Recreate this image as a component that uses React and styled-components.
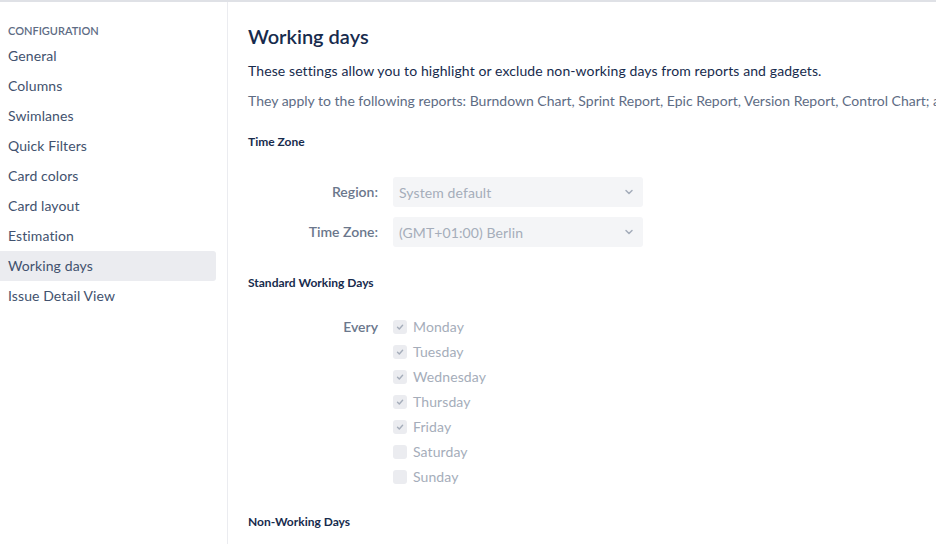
import React from "react";
import styled, { createGlobalStyle } from "styled-components";

const GlobalStyle = createGlobalStyle`
  html, body {
    margin: 0;
    padding: 0;
    background: #fff;
    overflow: hidden;
  }
  body {
    font-family: "Lato", "Noto Sans", sans-serif;
    color: #172b4d;
  }
`;

const Page = styled.div`
  display: flex;
  height: 544px;
  border-top: 2px solid #dfe1e6;
  box-sizing: border-box;
`;

const Sidebar = styled.nav`
  width: 228px;
  flex-shrink: 0;
  border-right: 1px solid #ebecf0;
  padding-top: 22px;
  padding-right: 11px;
  box-sizing: border-box;
`;

const SideHeading = styled.div`
  font-size: 11px;
  font-weight: 600;
  color: #5e6c84;
  padding-left: 8px;
  line-height: 13px;
  margin-bottom: 4px;
  text-transform: uppercase;
`;

const SideItem = styled.a`
  display: block;
  height: 30px;
  line-height: 30px;
  padding-left: 8px;
  font-size: 14px;
  letter-spacing: 0.1px;
  color: #42526e;
  border-radius: 0 3px 3px 0;
  background: ${(p) => (p.$active ? "#ebecf0" : "transparent")};
`;

const Main = styled.main`
  flex: 1;
  padding: 20px 0 0 20px;
  white-space: nowrap;
  overflow: hidden;
`;

const Title = styled.h1`
  margin: 0;
  font-size: 20px;
  font-weight: 600;
  line-height: 28px;
  color: #172b4d;
`;

const Text = styled.p`
  margin: ${(p) => (p.$first ? "11px" : "10px")} 0 0;
  font-size: 14px;
  letter-spacing: ${(p) => (p.$muted ? "0" : "0.1px")};
  line-height: 20px;
  color: ${(p) => (p.$muted ? "#5e6c84" : "#172b4d")};
`;

const SectionTitle = styled.h3`
  margin: ${(p) => p.$mt || "24px"} 0 0;
  font-size: 12px;
  font-weight: 700;
  line-height: 16px;
  color: #172b4d;
`;

const Form = styled.div`
  display: flex;
  flex-direction: column;
  gap: 10px;
  margin-top: ${(p) => p.$mt || "27px"};
`;

const Row = styled.div`
  display: grid;
  grid-template-columns: 130px 250px;
  column-gap: 15px;
  align-items: ${(p) => (p.$top ? "start" : "center")};
`;

const Label = styled.label`
  text-align: right;
  font-size: 14px;
  font-weight: 600;
  color: #6b778c;
  line-height: 20px;
`;

const Select = styled.div`
  height: 30px;
  background: #f4f5f7;
  border-radius: 3px;
  display: flex;
  align-items: center;
  justify-content: space-between;
  padding: 0 8px 0 6px;
  font-size: 14px;
  letter-spacing: 0.1px;
  color: #a5adba;
`;

const Checks = styled.div`
  display: flex;
  flex-direction: column;
`;

const CheckRow = styled.div`
  display: flex;
  align-items: center;
  gap: 6px;
  height: 25px;
  margin-top: -3px;
  margin-bottom: 3px;
  font-size: 14px;
  letter-spacing: 0.1px;
  color: #a5adba;
`;

const Box = styled.span`
  width: 14px;
  height: 14px;
  border-radius: 3px;
  background: #ebecf0;
  display: flex;
  align-items: center;
  justify-content: center;
`;

const Chevron = () => (
  <svg width="12" height="12" viewBox="0 0 12 12">
    <path d="M3 4.5 L6 7.5 L9 4.5" fill="none" stroke="#a5adba" strokeWidth="1.5" strokeLinecap="round" strokeLinejoin="round" />
  </svg>
);

const Tick = () => (
  <svg width="10" height="10" viewBox="0 0 10 10">
    <path d="M2.5 5.2 L4.3 7 L7.6 3.3" fill="none" stroke="#a5adba" strokeWidth="1.4" strokeLinecap="round" strokeLinejoin="round" />
  </svg>
);

const navItems = [
  "General",
  "Columns",
  "Swimlanes",
  "Quick Filters",
  "Card colors",
  "Card layout",
  "Estimation",
  "Working days",
  "Issue Detail View",
];

const days = [
  ["Monday", true],
  ["Tuesday", true],
  ["Wednesday", true],
  ["Thursday", true],
  ["Friday", true],
  ["Saturday", false],
  ["Sunday", false],
];

export default function App() {
  return (
    <>
      <GlobalStyle />
      <Page>
        <Sidebar>
          <SideHeading>Configuration</SideHeading>
          {navItems.map((item) => (
            <SideItem key={item} $active={item === "Working days"}>
              {item}
            </SideItem>
          ))}
        </Sidebar>
        <Main>
          <Title>Working days</Title>
          <Text $first>
            These settings allow you to highlight or exclude non-working days from reports and gadgets.
          </Text>
          <Text $muted>
            They apply to the following reports: Burndown Chart, Sprint Report, Epic Report, Version Report, Control Chart; and the following gadgets: Sprint Health.
          </Text>

          <SectionTitle $mt="23px">Time Zone</SectionTitle>
          <Form>
            <Row>
              <Label>Region:</Label>
              <Select>
                System default
                <Chevron />
              </Select>
            </Row>
            <Row>
              <Label>Time Zone:</Label>
              <Select>
                (GMT+01:00) Berlin
                <Chevron />
              </Select>
            </Row>
          </Form>

          <SectionTitle $mt="28px">Standard Working Days</SectionTitle>
          <Form $mt="26px">
            <Row $top>
              <Label>Every</Label>
              <Checks>
                {days.map(([d, on]) => (
                  <CheckRow key={d}>
                    <Box>{on && <Tick />}</Box>
                    {d}
                  </CheckRow>
                ))}
              </Checks>
            </Row>
          </Form>

          <SectionTitle $mt="22px">Non-Working Days</SectionTitle>
        </Main>
      </Page>
    </>
  );
}
